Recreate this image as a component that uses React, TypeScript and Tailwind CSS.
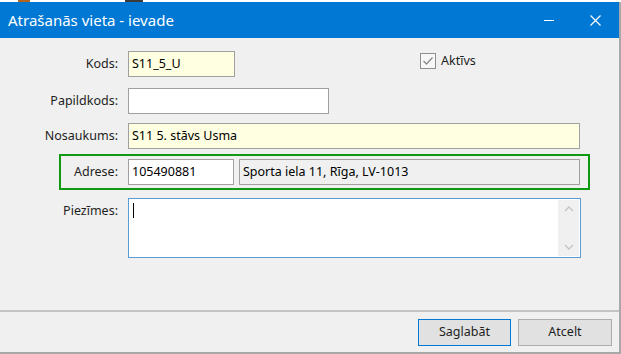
import React from 'react';

const font = { fontFamily: '"Noto Sans", "DejaVu Sans", sans-serif' };

const Label: React.FC<{ text: string; w?: string }> = ({ text, w = 'w-[118px]' }) => (
  <div className={`${w} shrink-0 text-right text-[12.5px] text-[#1e1e1e] leading-none`}>{text}</div>
);

export default function App() {
  return (
    <div className="w-[621px] h-[354px] bg-white flex flex-col overflow-hidden" style={font}>
      {/* strip of the window behind */}
      <div className="h-[2px] flex shrink-0">
        <div className="w-[18px]" />
        <div className="w-[12px] bg-[#b5651d]" />
        <div className="w-[95px]" />
        <div className="w-[18px] bg-[#3b3b3b]" />
      </div>

      <div className="flex-1 flex flex-col border-r-2 border-b-2 border-[#a8a8a8]">
        {/* title bar */}
        <div className="h-[36px] bg-[#0078d4] flex items-center pl-[8px] shrink-0">
          <span className="text-white text-[15px] flex-1">Atrašanās vieta - ievade</span>
          <span className="w-[46px] flex justify-center">
            <span className="block w-[10px] h-[1px] bg-white" />
          </span>
          <span className="w-[46px] flex justify-center mr-[1px]">
            <svg width="11" height="11" viewBox="0 0 11 11">
              <path d="M0.5 0.5 L10.5 10.5 M10.5 0.5 L0.5 10.5" stroke="white" strokeWidth="1.2" />
            </svg>
          </span>
        </div>

        <div className="flex-1 bg-[#f0f0f0] flex flex-col">
          {/* Kods + Aktivs */}
          <div className="flex items-center mt-[13px] h-[26px]">
            <Label text="Kods:" />
            <div className="ml-[10px] w-[107px] h-[26px] bg-[#ffffe1] border border-[#a0a0a0] flex items-center px-[3px] text-[12.5px] text-black">
              S11_5_U
            </div>
            <div className="ml-[185px] flex items-center self-start mt-[1px]">
              <div className="w-[16px] h-[16px] border border-[#8f8f8f] bg-[#f7f7f7] flex items-center justify-center">
                <svg width="12" height="10" viewBox="0 0 12 10">
                  <path d="M1.5 5 L4.5 8 L10.5 1.5" fill="none" stroke="#8a8a8a" strokeWidth="1.3" />
                </svg>
              </div>
              <span className="ml-[5px] text-[12.5px] text-[#1e1e1e]">Aktīvs</span>
            </div>
          </div>

          {/* Papildkods */}
          <div className="flex items-center mt-[11px]">
            <Label text="Papildkods:" />
            <div className="ml-[10px] w-[201px] h-[26px] bg-white border border-[#a0a0a0]" />
          </div>

          {/* Nosaukums */}
          <div className="flex items-center mt-[9px]">
            <Label text="Nosaukums:" />
            <div className="ml-[10px] w-[452px] h-[26px] bg-[#ffffe1] border border-[#a0a0a0] flex items-center px-[3px] text-[12.5px] text-black">
              S11 5. stāvs Usma
            </div>
          </div>

          {/* Adrese */}
          <div className="ml-[59px] mt-[5px] w-[531px] h-[36px] border-2 border-[#119a11] flex items-center">
            <Label text="Adrese:" w="w-[57px]" />
            <div className="ml-[10px] w-[106px] h-[26px] bg-white border border-[#a0a0a0] flex items-center px-[3px] text-[12.5px] text-black">
              105490881
            </div>
            <div className="ml-[5px] w-[341px] h-[26px] bg-[#f0f0f0] border border-[#a0a0a0] flex items-center px-[3px] text-[12.5px] text-black">
              Sporta iela 11, Rīga, LV-1013
            </div>
          </div>

          {/* Piezimes */}
          <div className="flex items-start mt-[8px]">
            <div className="pt-[7px]">
              <Label text="Piezīmes:" />
            </div>
            <div className="ml-[10px] w-[453px] h-[60px] bg-white border border-[#5b9bd5] flex">
              <div className="flex-1 pl-[4px] pt-[4px]">
                <div className="w-[1px] h-[15px] bg-black" />
              </div>
              <div className="w-[21px] bg-[#f0f0f0] flex flex-col items-center justify-between py-[6px] mr-[1px] my-[1px]">
                <svg width="10" height="6" viewBox="0 0 10 6">
                  <path d="M1 5 L5 1 L9 5" fill="none" stroke="#c2c2c2" strokeWidth="1.3" />
                </svg>
                <svg width="10" height="6" viewBox="0 0 10 6">
                  <path d="M1 1 L5 5 L9 1" fill="none" stroke="#c2c2c2" strokeWidth="1.3" />
                </svg>
              </div>
            </div>
          </div>

          <div className="flex-1" />

          {/* footer */}
          <div className="border-t-2 border-[#c4c4c4] h-[42px] flex items-center justify-end pr-[7px] gap-[7px]">
            <button className="w-[93px] h-[27px] bg-[#e1e1e1] border border-[#0078d7] text-[12.5px] text-[#1e1e1e]">
              Saglabāt
            </button>
            <button className="w-[94px] h-[27px] bg-[#e1e1e1] border border-[#adadad] text-[12.5px] text-[#1e1e1e]">
              Atcelt
            </button>
          </div>
        </div>
      </div>
    </div>
  );
}
